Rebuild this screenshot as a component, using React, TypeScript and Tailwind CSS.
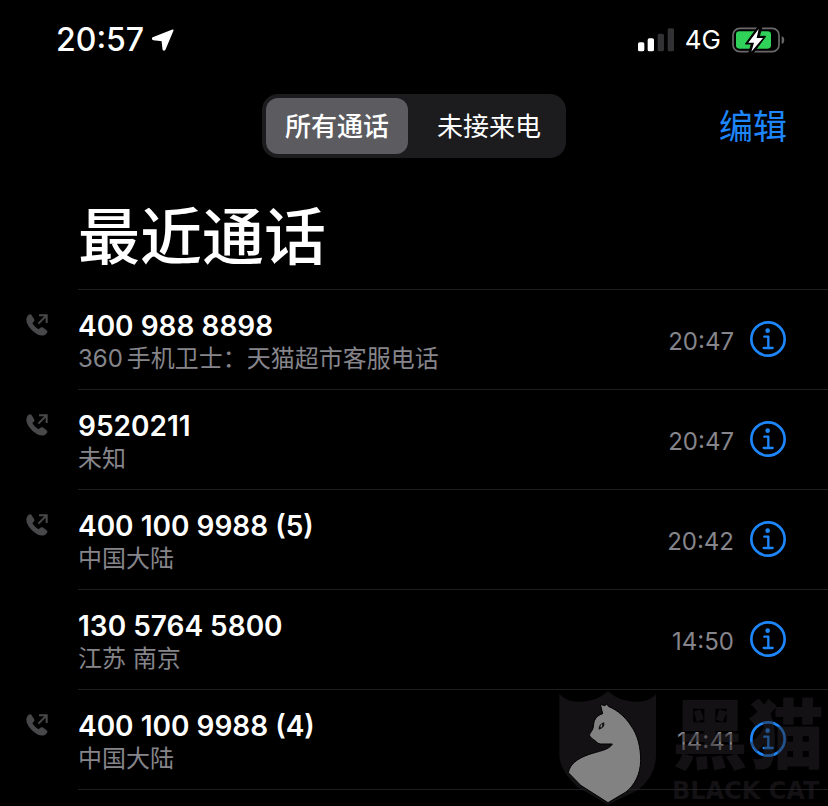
import React, { useState } from 'react';

interface Call {
  id: number;
  number: string;
  prefix?: string;
  label: string;
  time: string;
  outgoing: boolean;
}

const calls: Call[] = [
  { id: 1, number: '400 988 8898', prefix: '360', label: '手机卫士：天猫超市客服电话', time: '20:47', outgoing: true },
  { id: 2, number: '9520211', label: '未知', time: '20:47', outgoing: true },
  { id: 3, number: '400 100 9988 (5)', label: '中国大陆', time: '20:42', outgoing: true },
  { id: 4, number: '130 5764 5800', label: '江苏 南京', time: '14:50', outgoing: false },
  { id: 5, number: '400 100 9988 (4)', label: '中国大陆', time: '14:41', outgoing: true },
];

const LocationIcon = () => (
  <svg viewBox="0 0 66 66" className="h-[22px] w-[22px]" fill="#fff" stroke="#fff" strokeWidth="5" strokeLinejoin="round" aria-hidden="true">
    <path d="M62 4 L3 27 Q1 30 4 31 L31 34 L34 61 Q36 64 38 61 Z" />
  </svg>
);

const SignalIcon = () => (
  <svg viewBox="0 0 108 72" className="h-6 w-9" aria-hidden="true">
    <rect x="0" y="43" width="19" height="27" rx="5" fill="#fff" />
    <rect x="29" y="31" width="19" height="39" rx="5" fill="#fff" />
    <rect x="59" y="17" width="19" height="53" rx="5" fill="#323234" />
    <rect x="89" y="1" width="19" height="69" rx="5" fill="#323234" />
  </svg>
);

const BatteryIcon = () => (
  <svg viewBox="0 0 159 84" className="h-7 w-[53px]" aria-hidden="true">
    <rect x="3" y="7" width="138" height="70" rx="20" fill="none" stroke="#69696b" strokeWidth="5" />
    <path d="M149 30 Q157 33 157 42 Q157 51 149 54 Z" fill="#69696b" />
    <rect x="12" y="16" width="105" height="52" rx="10" fill="#30d158" />
    <path
      d="M78 2 L40 54 H58 L50 82 L63 82 L101 31 H82 L90 2 Z"
      fill="#000"
      stroke="#000"
      strokeWidth="3"
      strokeLinejoin="round"
    />
    <path d="M80 9 L49 50 H66 L58 77 L93 36 H74 Z" fill="#fff" />
  </svg>
);

const OutgoingIcon = () => (
  <svg viewBox="0 0 66 66" className="h-[22px] w-[22px]" role="img" aria-label="呼出">
    <path
      d="M4 7 C9 0 14 -1 18 5 L24 15 C27 20 24 23 19 27 C22 34 30 42 38 46 C43 40 47 38 52 41 L61 48 C66 52 65 56 60 60 C52 68 38 66 24 54 C8 41 -5 21 4 7 Z"
      fill="#48484a"
    />
    <path d="M37 29 L61 5 M39 4 H62 V27" fill="none" stroke="#48484a" strokeWidth="6" />
  </svg>
);

const InfoIcon = () => (
  <svg viewBox="0 0 108 108" className="h-9 w-9" fill="none" stroke="#1e86fb" aria-hidden="true">
    <circle cx="54" cy="54" r="50" strokeWidth="8" />
    <circle cx="53" cy="29" r="7" fill="#1e86fb" stroke="none" />
    <path d="M43 47 H55 V81 M41 81 H68" strokeWidth="7" strokeLinecap="round" strokeLinejoin="round" />
  </svg>
);

// Translucent stamp in the bottom corner
const Watermark = () => (
  <div className="pointer-events-none absolute right-0 bottom-0 flex w-[270px] items-start text-[#262226]/50">
    <svg viewBox="0 0 300 348" className="h-[116px] w-[100px] shrink-0" aria-hidden="true">
      <path
        d="M4 12 Q28 38 70 35 Q116 34 150 4 Q184 34 230 35 Q272 38 294 12 V195 Q294 258 240 300 L150 344 L58 290 Q4 240 4 195 Z"
        fill="currentColor"
      />
      <path
        d="M127 43 L140 47 L146 43 L153 50 C178 60 204 83 218 106 C240 135 248 173 248 212 C247 252 230 286 204 306 L150 338 L68 286 L31 248 C36 222 58 206 91 194 C122 183 152 181 163 162 L128 162 C118 161 116 156 110 151 C102 146 92 137 95 133 C98 125 107 119 107 103 C108 87 118 76 134 71 Z"
        fill="#828282"
        stroke="#000"
        strokeWidth="3"
      />
      <path d="M122 119 Q121 101 139 97 Q142 114 122 119 Z" fill="#141214" />
      <path d="M131 103 L129 112" stroke="#828282" strokeWidth="4" />
    </svg>
    <div className="ml-[14px] flex flex-col whitespace-nowrap">
      <span className="font-['Noto_Sans_CJK_SC',sans-serif] text-[76px] leading-[80px] font-black">黑猫</span>
      <span className="mt-[7px] font-['DejaVu_Sans',sans-serif] text-2xl leading-7 font-bold">BLACK CAT</span>
    </div>
  </div>
);

const CallRow = ({ call }: { call: Call }) => (
  <li className="flex h-[100px]">
    <div className="w-[78px] shrink-0 pt-6 pl-[26px]">{call.outgoing && <OutgoingIcon />}</div>
    <div className="flex min-w-0 flex-1 items-center border-b border-[#1f1f21] pr-[42px]">
      <div className="min-w-0 flex-1 pt-[6px]">
        <p className="text-[28px] leading-8 font-semibold text-white">{call.number}</p>
        <p className="truncate text-2xl leading-[34px] text-[#85858b]">
          {call.prefix && <span className="mr-1">{call.prefix}</span>}
          {call.label}
        </p>
      </div>
      <time className="mr-4 pt-1 text-2xl text-[#85858b]">{call.time}</time>
      <button type="button" className="mb-[2px]" aria-label={`${call.number} 详情`}>
        <InfoIcon />
      </button>
    </div>
  </li>
);

const App: React.FC = () => {
  const [tab, setTab] = useState<'all' | 'missed'>('all');

  return (
    <div className="relative min-h-screen overflow-hidden bg-black font-['Inter','Noto_Sans_CJK_SC',sans-serif] text-white">
      {/* Status bar */}
      <div className="flex h-20 items-center justify-between pr-[43px] pl-[56px]">
        <div className="flex items-center gap-2">
          <span className="text-[32px] leading-8 font-medium">20:57</span>
          <LocationIcon />
        </div>
        <div className="flex items-center gap-[11px]">
          <SignalIcon />
          <span className="text-[26px] leading-8">4G</span>
          <BatteryIcon />
        </div>
      </div>

      {/* Filter and edit */}
      <header className="grid grid-cols-[1fr_auto_1fr] items-center px-[41px] pt-[14px]">
        <div className="col-start-2 flex h-16 rounded-2xl bg-[#1c1c1f] p-1 text-[26px]">
          <button
            type="button"
            aria-pressed={tab === 'all'}
            onClick={() => setTab('all')}
            className={tab === 'all' ? 'w-[142px] rounded-xl bg-[#5b5b60] font-medium' : 'w-[142px]'}
          >
            所有通话
          </button>
          <button
            type="button"
            aria-pressed={tab === 'missed'}
            onClick={() => setTab('missed')}
            className={tab === 'missed' ? 'w-[154px] rounded-xl bg-[#5b5b60] pl-2 font-medium' : 'w-[154px] pl-2'}
          >
            未接来电
          </button>
        </div>
        <button type="button" className="justify-self-end pt-[2px] text-[34px] leading-10 text-[#1e86fb]">
          编辑
        </button>
      </header>

      <main>
        <h1 className="pt-[42px] pl-[78px] text-[62px] leading-[76px] font-medium">最近通话</h1>
        <div className="mt-[13px] ml-[78px] border-t border-[#1f1f21]" />
        <ul>
          {calls.map(call => (
            <CallRow key={call.id} call={call} />
          ))}
        </ul>
      </main>

      <Watermark />
    </div>
  );
};

export default App;
